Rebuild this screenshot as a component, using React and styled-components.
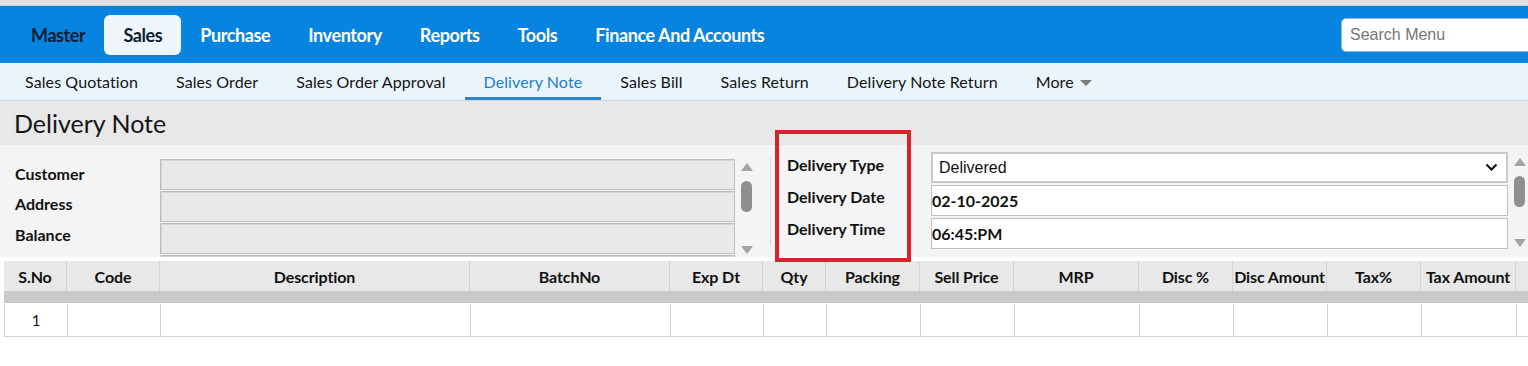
import React from 'react';
import styled, { createGlobalStyle } from 'styled-components';

const GlobalStyle = createGlobalStyle`
    body {
        margin: 0;
        background: #ffffff;
        font-family: Lato, "Open Sans", sans-serif;
        color: #111;
        overflow: hidden;
    }
`;

const Page = styled.div`
    position: relative;
    width: 1528px;
    overflow: hidden;
`;

const TopStrip = styled.div`
    height: 6px;
    background: #e2e2e2;
    border-bottom: 1px solid #cfcfcf;
    box-sizing: border-box;
`;

const MainNav = styled.div`
    display: flex;
    align-items: center;
    height: 57px;
    padding-left: 12px;
    background: #0784e0;
    overflow: hidden;
`;

const NavItem = styled.div`
    height: 40px;
    line-height: 40px;
    padding: 0 19px;
    border-radius: 6px;
    font-size: 18px;
    font-weight: 700;
    letter-spacing: -0.4px;
    color: ${({ $active, $dark }) => ($active || $dark ? '#0d1b33' : '#ffffff')};
    background: ${({ $active }) => ($active ? '#eef6fc' : 'transparent')};
`;

const Search = styled.input`
    flex-shrink: 0;
    margin-left: auto;
    margin-right: -16px;
    width: 203px;
    height: 34px;
    box-sizing: border-box;
    padding: 0 8px;
    border: 1px solid #8fb7d9;
    border-radius: 5px;
    font-family: "Liberation Sans", Arial, sans-serif;
    font-size: 16px;
    outline: none;

    &::placeholder {
        color: #767676;
    }
`;

const SubNav = styled.div`
    display: flex;
    align-items: stretch;
    height: 37px;
    padding-left: 6px;
    background: #eaf4fc;
    border-bottom: 1px solid #cdd8e2;
`;

const SubItem = styled.div`
    display: flex;
    align-items: center;
    gap: 6px;
    padding: 3px 19px 0;
    font-size: 16px;
    letter-spacing: 0.1px;
    color: ${({ $active }) => ($active ? '#1c7fca' : '#141414')};
    border-bottom: 3px solid ${({ $active }) => ($active ? '#2d86c6' : 'transparent')};
`;

const Caret = styled.span`
    width: 0;
    height: 0;
    margin-top: 2px;
    border-left: 6px solid transparent;
    border-right: 6px solid transparent;
    border-top: 6px solid #7b7b7b;
`;

const TitleBar = styled.div`
    display: flex;
    align-items: center;
    height: 44px;
    padding-left: 14px;
    background: #e8e8e8;
    font-size: 25px;
    color: #161616;
`;

const FormArea = styled.div`
    display: flex;
    align-items: flex-start;
    height: 112px;
    background: #f4f4f4;
    overflow: hidden;
`;

const LeftPanel = styled.div`
    display: flex;
    align-items: flex-start;
    padding: 14px 0 0 15px;
`;

const LabelStack = styled.div`
    display: flex;
    flex-direction: column;
    width: ${({ $width }) => $width}px;
    padding-top: ${({ $top }) => $top || 0}px;
    padding-left: ${({ $left }) => $left || 0}px;
    box-sizing: border-box;
`;

const Label = styled.div`
    height: ${({ $h }) => $h}px;
    line-height: ${({ $h }) => $h}px;
    font-size: 16px;
    font-weight: 700;
    color: #111;
`;

const InputStack = styled.div`
    display: flex;
    flex-direction: column;
    gap: ${({ $gap }) => $gap}px;
    width: ${({ $width }) => $width}px;
    height: 99px;
    margin-top: ${({ $top }) => $top || 0}px;
    overflow: hidden;
`;

const DisabledField = styled.div`
    flex-shrink: 0;
    height: 31px;
    box-sizing: border-box;
    background: #e9e9e9;
    border: 1px solid #bdbdbd;
    box-shadow: inset 1px 1px 0 #d4d4d4;
`;

const Field = styled.div`
    flex-shrink: 0;
    display: flex;
    align-items: center;
    height: 31px;
    box-sizing: border-box;
    padding: 0;
    background: #ffffff;
    border: 1px solid #bfbfbf;
    font-size: 16px;
    font-weight: 700;
    color: #111;
`;

const SelectField = styled(Field)`
    justify-content: space-between;
    padding: 0 8px 0 6px;
    border: 2px solid #c9c9c9;
    font-family: "Liberation Sans", Arial, sans-serif;
    font-weight: 400;
`;

const ScrollTrack = styled.div`
    display: flex;
    flex-direction: column;
    align-items: center;
    width: 15px;
    height: ${({ $h }) => $h}px;
    margin: ${({ $top }) => $top}px 0 0 4px;
`;

const Arrow = styled.span`
    width: 0;
    height: 0;
    border-left: 6px solid transparent;
    border-right: 6px solid transparent;
    ${({ $down }) =>
        $down ? 'border-top: 8px solid #a3a3a3; margin-top: auto;' : 'border-bottom: 8px solid #a3a3a3;'}
`;

const Thumb = styled.span`
    width: 11px;
    height: 31px;
    margin-top: ${({ $gap }) => $gap}px;
    border-radius: 6px;
    background: #8f8f8f;
`;

const Divider = styled.div`
    width: 1px;
    height: 88px;
    margin: 12px 0 0 16px;
    background: #d6d6d6;
`;

const RedBox = styled.div`
    position: absolute;
    left: 775px;
    top: 130px;
    width: 136px;
    height: 132px;
    box-sizing: border-box;
    border: 4px solid #d8232a;
    pointer-events: none;
`;

const TableWrap = styled.div`
    margin: 4px 0 0 4px;
    overflow: hidden;
`;

const columns = [
    ['S.No', 63],
    ['Code', 93],
    ['Description', 310],
    ['BatchNo', 200],
    ['Exp Dt', 93],
    ['Qty', 63],
    ['Packing', 94],
    ['Sell Price', 94],
    ['MRP', 125],
    ['Disc %', 94],
    ['Disc Amount', 94],
    ['Tax%', 94],
    ['Tax Amount', 95],
    ['', 100],
];

const gridTemplate = columns.map(([, w]) => `${w}px`).join(' ');

const HeadRow = styled.div`
    display: grid;
    grid-template-columns: ${gridTemplate};
    height: 30px;
    background: #e8e8e8;
`;

const HeadCell = styled.div`
    display: flex;
    align-items: center;
    justify-content: center;
    border-right: 1px solid #d3d3d3;
    font-size: 16px;
    font-weight: 700;
    letter-spacing: -0.1px;
    color: #111;
    white-space: nowrap;
`;

const Band = styled.div`
    height: 12px;
    background: #cacaca;
`;

const BodyRow = styled.div`
    display: grid;
    grid-template-columns: ${gridTemplate};
    height: 33px;
    margin-top: 1px;
    border-left: 1px solid #d0d0d0;
    border-bottom: 1px solid #d0d0d0;
    box-sizing: border-box;
`;

const Cell = styled.div`
    display: flex;
    align-items: center;
    justify-content: center;
    border-right: 1px solid #d0d0d0;
    font-size: 15px;
    color: #111;
`;

const Chevron = () => (
    <svg width="13" height="9" viewBox="0 0 13 9">
        <path d="M1.5 1.5 L6.5 6.5 L11.5 1.5" fill="none" stroke="#111" strokeWidth="2.2" />
    </svg>
);

const mainItems = ['Master', 'Sales', 'Purchase', 'Inventory', 'Reports', 'Tools', 'Finance And Accounts'];
const subItems = [
    'Sales Quotation',
    'Sales Order',
    'Sales Order Approval',
    'Delivery Note',
    'Sales Bill',
    'Sales Return',
    'Delivery Note Return',
];

const App = () => {
    return (
        <Page>
            <GlobalStyle />
            <TopStrip />
            <MainNav>
                {mainItems.map((item) => (
                    <NavItem key={item} $active={item === 'Sales'} $dark={item === 'Master'}>
                        {item}
                    </NavItem>
                ))}
                <Search placeholder="Search Menu" />
            </MainNav>
            <SubNav>
                {subItems.map((item) => (
                    <SubItem key={item} $active={item === 'Delivery Note'}>
                        {item}
                    </SubItem>
                ))}
                <SubItem>
                    More
                    <Caret />
                </SubItem>
            </SubNav>
            <TitleBar>Delivery Note</TitleBar>
            <FormArea>
                <LeftPanel>
                    <LabelStack $width={145} $top={0}>
                        <Label $h={30}>Customer</Label>
                        <Label $h={29}>Address</Label>
                        <Label $h={33}>Balance</Label>
                    </LabelStack>
                    <InputStack $width={575} $gap={1}>
                        <DisabledField />
                        <DisabledField />
                        <DisabledField />
                        <DisabledField />
                    </InputStack>
                    <ScrollTrack $h={91} $top={4}>
                        <Arrow />
                        <Thumb $gap={10} />
                        <Arrow $down />
                    </ScrollTrack>
                </LeftPanel>
                <Divider />
                <LabelStack $width={160} $top={4} $left={16}>
                    <Label $h={32}>Delivery Type</Label>
                    <Label $h={32}>Delivery Date</Label>
                    <Label $h={32}>Delivery Time</Label>
                </LabelStack>
                <InputStack $width={577} $gap={2} $top={7}>
                    <SelectField>
                        Delivered
                        <Chevron />
                    </SelectField>
                    <Field>02-10-2025</Field>
                    <Field>06:45:PM</Field>
                    <Field />
                </InputStack>
                <ScrollTrack $h={89} $top={13}>
                    <Arrow />
                    <Thumb $gap={10} />
                    <Arrow $down />
                </ScrollTrack>
            </FormArea>
            <TableWrap>
                <HeadRow>
                    {columns.map(([name], i) => (
                        <HeadCell key={i}>{name}</HeadCell>
                    ))}
                </HeadRow>
                <Band />
                <BodyRow>
                    {columns.map((col, i) => (
                        <Cell key={i}>{i === 0 ? '1' : ''}</Cell>
                    ))}
                </BodyRow>
            </TableWrap>
            <RedBox />
        </Page>
    );
};

export default App;
